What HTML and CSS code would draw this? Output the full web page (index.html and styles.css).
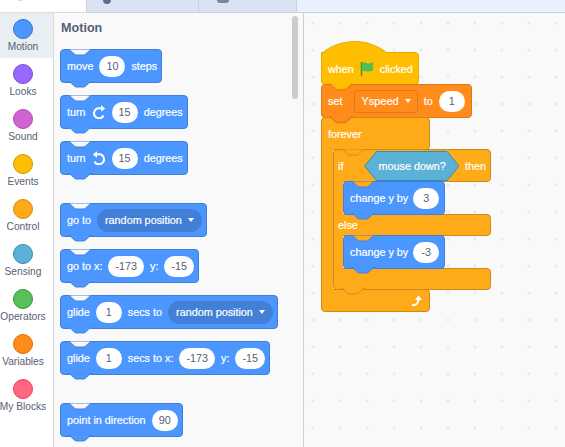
FILE: index.html
```html
<!DOCTYPE html>
<html lang="en">
<head>
    <meta charset="UTF-8">
    <meta name="viewport" content="width=device-width, initial-scale=1.0">
    <title>Motion blocks</title>
    <link rel="stylesheet" href="styles.css">
</head>
<body>
    <!-- shared shapes -->
    <svg class="sprite" aria-hidden="true">
        <symbol id="tab" viewBox="0 0 24 6">
            <path d="M0 0c1.5 0 2.2.5 3 1.3l3 3c.8.8 1.5 1.2 3 1.2h6c1.5 0 2.2-.4 3-1.2l3-3c.8-.8 1.5-1.3 3-1.3"/>
        </symbol>
        <symbol id="turn" viewBox="0 0 14 14">
            <path class="turn-line" d="M11.5 10.5A5 5 0 1 1 7.5 3.2H10"/>
            <path class="turn-head" d="M9 .3l4.2 3.2L9 6.7z"/>
        </symbol>
    </svg>

    <div class="tabs">
        <div class="tab tab-code"><span class="tab-icon icon-code"></span></div>
        <div class="tab tab-costumes"><span class="tab-icon icon-costumes"></span></div>
        <div class="tab tab-sounds"><span class="tab-icon icon-sounds"></span></div>
    </div>

    <div class="editor">
        <ul class="categories">
            <li class="category active"><span class="dot motion"></span>Motion</li>
            <li class="category"><span class="dot looks"></span>Looks</li>
            <li class="category"><span class="dot sound"></span>Sound</li>
            <li class="category"><span class="dot events"></span>Events</li>
            <li class="category"><span class="dot control"></span>Control</li>
            <li class="category"><span class="dot sensing"></span>Sensing</li>
            <li class="category"><span class="dot operators"></span>Operators</li>
            <li class="category"><span class="dot variables"></span>Variables</li>
            <li class="category"><span class="dot myblocks"></span>My Blocks</li>
        </ul>

        <div class="palette">
            <h2 class="palette-title">Motion</h2>
            <div class="scrollbar"></div>

            <div class="block blue">
                <svg class="notch"><use href="#tab"/></svg>
                move <span class="pill">10</span> steps
                <svg class="bump"><use href="#tab"/></svg>
            </div>
            <div class="block blue">
                <svg class="notch"><use href="#tab"/></svg>
                turn <svg class="turn-icon"><use href="#turn"/></svg> <span class="pill">15</span> degrees
                <svg class="bump"><use href="#tab"/></svg>
            </div>
            <div class="block blue">
                <svg class="notch"><use href="#tab"/></svg>
                turn <svg class="turn-icon flip"><use href="#turn"/></svg> <span class="pill">15</span> degrees
                <svg class="bump"><use href="#tab"/></svg>
            </div>

            <div class="block blue group-start">
                <svg class="notch"><use href="#tab"/></svg>
                go to <span class="menu">random position <i class="caret"></i></span>
                <svg class="bump"><use href="#tab"/></svg>
            </div>
            <div class="block blue">
                <svg class="notch"><use href="#tab"/></svg>
                go to x: <span class="pill">-173</span> y: <span class="pill">-15</span>
                <svg class="bump"><use href="#tab"/></svg>
            </div>
            <div class="block blue">
                <svg class="notch"><use href="#tab"/></svg>
                glide <span class="pill">1</span> secs to <span class="menu">random position <i class="caret"></i></span>
                <svg class="bump"><use href="#tab"/></svg>
            </div>
            <div class="block blue">
                <svg class="notch"><use href="#tab"/></svg>
                glide <span class="pill">1</span> secs to x: <span class="pill">-173</span> y: <span class="pill">-15</span>
                <svg class="bump"><use href="#tab"/></svg>
            </div>

            <div class="block blue group-start">
                <svg class="notch"><use href="#tab"/></svg>
                point in direction <span class="pill">90</span>
                <svg class="bump"><use href="#tab"/></svg>
            </div>
        </div>

        <div class="workspace">
            <div class="script">
                <svg class="hat-cap" viewBox="0 0 67 13">
                    <path d="M.5 13C8 5 22 .5 34 .5S58 5 66.5 12.5"/>
                </svg>
                <div class="block yellow hat">
                    when
                    <svg class="flag" viewBox="0 0 14 16">
                        <path class="flag-pole" d="M1.5 1v14"/>
                        <path class="flag-cloth" d="M2 2c3-1.500 5 1 7 .5 1.500-.3 3-1 4-1.200v8c-1.500.5-3 1.200-4.500 1.200C6.500 10.500 4 9 2 10z"/>
                    </svg>
                    clicked
                    <svg class="bump"><use href="#tab"/></svg>
                </div>
                <div class="block orange stacked">
                    <svg class="notch"><use href="#tab"/></svg>
                    set <span class="var-menu">Yspeed <i class="caret"></i></span> to <span class="pill">1</span>
                    <svg class="bump"><use href="#tab"/></svg>
                </div>

                <div class="c-block">
                    <div class="block amber stacked forever-head">
                        <svg class="notch"><use href="#tab"/></svg>
                        forever
                    </div>
                    <div class="c-body">
                        <div class="c-arm forever-arm"></div>
                        <div class="c-block if-block">
                            <div class="block amber if-part if-head">
                                <svg class="notch inner"><use href="#tab"/></svg>
                                if
                                <span class="hexagon">
                                    <svg class="hexagon-shape" viewBox="0 0 96 30" preserveAspectRatio="none">
                                        <path d="M.7 15L12.500.5h71L95.300 15 83.500 29.500h-71z"/>
                                    </svg>
                                    <span class="hexagon-text">mouse down?</span>
                                </span>
                                then
                            </div>
                            <div class="c-body">
                                <div class="c-arm if-arm"></div>
                                <div class="block blue nested">
                                    <svg class="notch inner"><use href="#tab"/></svg>
                                    change y by <span class="pill">3</span>
                                    <svg class="bump"><use href="#tab"/></svg>
                                </div>
                            </div>
                            <div class="block amber if-part if-mid">else</div>
                            <div class="c-body">
                                <div class="c-arm if-arm"></div>
                                <div class="block blue nested">
                                    <svg class="notch inner"><use href="#tab"/></svg>
                                    change y by <span class="pill">-3</span>
                                    <svg class="bump"><use href="#tab"/></svg>
                                </div>
                            </div>
                            <div class="block amber if-part if-end">
                                <svg class="bump"><use href="#tab"/></svg>
                            </div>
                        </div>
                    </div>
                    <div class="block amber forever-foot">
                        <svg class="repeat" viewBox="0 0 12 12">
                            <path class="repeat-line" d="M1 10c3 .5 6-.5 6.500-5"/>
                            <path class="repeat-head" d="M7.500.5L11 5H4z"/>
                        </svg>
                    </div>
                </div>
            </div>
        </div>
    </div>
</body>
</html>
```

FILE: styles.css
```css
* {
    box-sizing: border-box;
}
html, body {
    height: 100%;
}
body {
    margin: 0;
    overflow: hidden;
    display: flex;
    flex-direction: column;
    font-family: "Liberation Sans", Arial, sans-serif;
    background-color: #f9f9f9;
}
.sprite {
    display: none;
}

/* tabs cut off at the top of the window */
.tabs {
    display: flex;
    height: 13px;
    flex: none;
    background-color: #e9f1fc;
    border-bottom: 1px solid #c5d0e6;
}
.tab {
    position: relative;
    height: 12px;
    background-color: #d9e3f2;
    border-right: 1px solid #c5d0e6;
}
.tab-code {
    width: 87px;
    background-color: white;
    height: 13px;
    border-bottom: 1px solid #dddddd;
}
.tab-costumes {
    width: 112px;
}
.tab-sounds {
    width: 98px;
}
.tab-icon {
    position: absolute;
    top: -4px;
    border-radius: 50%;
}
.icon-code {
    left: 18px;
    width: 5px;
    height: 5px;
    background-color: #a5e0f7;
}
.icon-costumes {
    left: 16px;
    width: 8px;
    height: 8px;
    background-color: #5f6a91;
}
.icon-sounds {
    left: 18px;
    width: 12px;
    height: 7px;
    border-radius: 3px;
    background-color: #7b83a3;
}

.editor {
    flex: 1;
    display: flex;
    min-height: 0;
}

/* category column */
.categories {
    width: 54px;
    flex: none;
    margin: 0;
    padding: 0;
    list-style: none;
    background-color: white;
    border-right: 1px solid #d9d9d9;
}
.category {
    height: 45px;
    display: flex;
    flex-direction: column;
    align-items: center;
    padding: 6px 7px 0 0;
    font-size: 10.2px;
    line-height: 12px;
    color: #575e75;
    white-space: nowrap;
}
.category.active {
    background-color: #e9eef2;
}
.dot {
    width: 20px;
    height: 20px;
    margin-bottom: 2px;
    flex: none;
    border-radius: 50%;
    border: 1px solid;
}
.motion { background-color: #4c97ff; border-color: #3373cc; }
.looks { background-color: #9966ff; border-color: #774dcb; }
.sound { background-color: #cf63cf; border-color: #bd42bd; }
.events { background-color: #ffbf00; border-color: #cc9900; }
.control { background-color: #ffab19; border-color: #cf8b17; }
.sensing { background-color: #5cb1d6; border-color: #2e8eb8; }
.operators { background-color: #59c059; border-color: #389438; }
.variables { background-color: #ff8c1a; border-color: #db6e00; }
.myblocks { background-color: #ff6680; border-color: #ff3355; }

/* block palette */
.palette {
    position: relative;
    width: 250px;
    flex: none;
    padding: 8px 0 0 6px;
    overflow: hidden;
    background-color: #f9f9f9;
    border-right: 1px solid #cfcfcf;
    --notch: #f9f9f9;
}
.palette-title {
    margin: 0 0 13px 1px;
    height: 15px;
    font-size: 12.6px;
    line-height: 15px;
    color: #575e75;
}
.scrollbar {
    position: absolute;
    top: 3px;
    left: 238px;
    width: 6px;
    height: 83px;
    border-radius: 3px;
    background-color: #cccccc;
}
.palette .block {
    margin-bottom: 12px;
}
.palette .group-start {
    margin-top: 28px;
}

/* blocks */
.block {
    position: relative;
    display: flex;
    align-items: center;
    gap: 6px;
    width: fit-content;
    height: 34px;
    padding: 0 4px 0 6px;
    border: 1px solid var(--line);
    border-radius: 4px;
    background-color: var(--fill);
    color: white;
    font-size: 10.8px;
    -webkit-text-stroke: 0.2px;
    white-space: nowrap;
}
.blue { --fill: #4c97ff; --line: #4280d7; }
.yellow { --fill: #ffbf00; --line: #e6ac00; }
.orange { --fill: #ff8c1a; --line: #db7a15; }
.amber { --fill: #ffab19; --line: #cf8b17; }

.notch, .bump {
    position: absolute;
    left: 7px;
    width: 24px;
    height: 7px;
    overflow: visible;
}
.notch {
    top: -1px;
    fill: var(--notch);
    stroke: var(--line);
}
.bump {
    bottom: -6px;
    z-index: 2;
    fill: var(--fill);
    stroke: var(--line);
}
.notch.inner {
    --notch: var(--parent, #ffab19);
}
.pill {
    min-width: 26px;
    height: 21px;
    padding: 0 7px;
    display: flex;
    align-items: center;
    justify-content: center;
    border-radius: 11px;
    background-color: white;
    color: #575e75;
    -webkit-text-stroke: 0;
}
.menu {
    display: flex;
    align-items: center;
    gap: 6px;
    height: 23px;
    padding: 0 8px;
    border-radius: 12px;
    background-color: #4280d7;
}
.caret {
    width: 0;
    height: 0;
    border: 3.5px solid transparent;
    border-top: 4px solid white;
    border-bottom: 0;
}
.turn-icon {
    width: 14px;
    height: 14px;
    flex: none;
}
.turn-icon.flip {
    transform: scaleX(-1);
}
.turn-line {
    fill: none;
    stroke: white;
    stroke-width: 2;
}
.turn-head {
    fill: white;
}

/* the script on the workspace */
.workspace {
    position: relative;
    flex: 1;
    overflow: hidden;
    background-color: #f9f9f9;
    background-image: radial-gradient(circle, #e2e2e2 1px, transparent 1.2px);
    background-size: 27px 27px;
    background-position: -4.5px -3.5px;
}
.script {
    position: absolute;
    top: 28px;
    left: 17px;
    display: flex;
    flex-direction: column;
}
.hat-cap {
    display: block;
    width: 67px;
    height: 13px;
    margin-bottom: -2px;
    position: relative;
    z-index: 1;
    fill: #ffbf00;
    stroke: #e6ac00;
}
.hat {
    width: 98px;
    height: 33px;
    border-top-left-radius: 0;
}
.flag {
    width: 14px;
    height: 16px;
    flex: none;
}
.flag-pole {
    fill: none;
    stroke: #3f9a3f;
    stroke-width: 1.500;
}
.flag-cloth {
    fill: #4cbf56;
}
.stacked {
    margin-top: -1px;
}
.orange {
    width: 151px;
    --notch: #ff8c1a;
}
.var-menu {
    display: flex;
    align-items: center;
    gap: 6px;
    height: 23px;
    margin-left: 6px;
    padding: 0 6px;
    border: 1px solid #db7a15;
    border-radius: 3px;
    background-color: #ff8c1a;
    font-size: 11px;
}
.c-block {
    display: flex;
    flex-direction: column;
}
.if-block {
    position: relative;
    z-index: 1;
}
.c-body {
    display: flex;
    margin-top: -1px;
}
.c-arm {
    position: relative;
    z-index: 1;
    flex: none;
    background-color: #ffab19;
    border-left: 1px solid #cf8b17;
}
.forever-arm {
    width: 12px;
}
.if-arm {
    width: 10px;
}
.forever-head {
    --notch: #ff8c1a;
    width: 109px;
    height: 33px;
    border-bottom-left-radius: 0;
}
.if-part {
    width: 158px;
    gap: 0;
    padding-left: 4px;
}
.if-head {
    gap: 5px;
    height: 33px;
    border-bottom-left-radius: 0;
}
.if-mid, .if-end {
    height: 22px;
    margin-top: -1px;
    border-top-left-radius: 0;
}
.if-mid {
    border-bottom-left-radius: 0;
}
.nested {
    --parent: #ffab19;
    z-index: 1;
    width: 102px;
    gap: 5px;
}
.hexagon {
    position: relative;
    width: 96px;
    height: 30px;
    margin-left: 16px;
    display: flex;
    align-items: center;
    justify-content: center;
}
.hexagon-shape {
    position: absolute;
    inset: 0;
    width: 100%;
    height: 100%;
    fill: #5cb1d6;
    stroke: #2e8eb8;
}
.hexagon-text {
    position: relative;
}
.forever-foot {
    width: 109px;
    height: 23px;
    margin-top: -1px;
    justify-content: flex-end;
    padding-right: 6px;
    border-top-left-radius: 0;
}
.repeat {
    width: 12px;
    height: 12px;
}
.repeat-line {
    fill: none;
    stroke: white;
    stroke-width: 2;
}
.repeat-head {
    fill: white;
}
```
